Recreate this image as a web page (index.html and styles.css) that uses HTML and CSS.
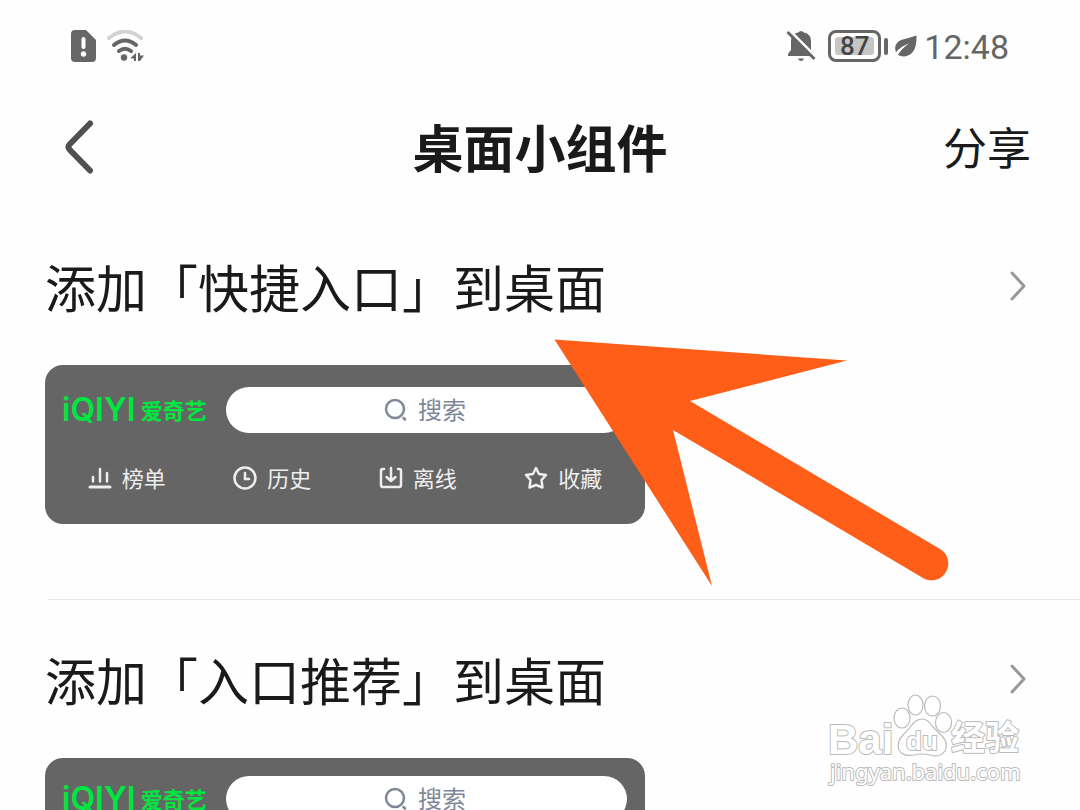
FILE: index.html
```
<!DOCTYPE html>
<html lang="zh-CN">
<head>
    <meta charset="UTF-8">
    <meta name="viewport" content="width=device-width, initial-scale=1.0">
    <title>桌面小组件</title>
    <link rel="stylesheet" href="styles.css">
</head>
<body>
<div class="screen">

    <!-- Status bar -->
    <div class="status-bar">
        <div class="status-group">
            <svg width="26" height="32" viewBox="0 0 26 32">
                <path d="M4 0H15L25 10V28Q25 32 21 32H4Q0 32 0 28V4Q0 0 4 0Z" fill="#666"/>
                <path d="M12.500 9V17" stroke="#fff" stroke-width="4" stroke-linecap="round"/>
                <circle cx="12.500" cy="24" r="2.700" fill="#fff"/>
            </svg>
            <svg width="40" height="32" viewBox="0 0 40 32" fill="none" stroke-width="4" stroke-linecap="round">
                <path d="M3 8Q19 -5 35 8" stroke="#d3d3d3"/>
                <path d="M8 15Q19 6 30 15" stroke="#666"/>
                <path d="M13 21Q19 16.500 25 21" stroke="#666"/>
                <circle cx="18" cy="27.500" r="3.200" fill="#666"/>
                <path d="M25 27.500L30 23V31H28V28.500H25ZM32 23H34V25.500H38L34 31H32Z" fill="#666"/>
            </svg>
        </div>
        <div class="status-group status-right">
            <svg width="32" height="32" viewBox="0 0 32 32">
                <path d="M3 26V24L6 20V11Q6 4 13 2.500Q16 -0.500 19 2.500Q26 4 26 11V20L29 24V26Z" fill="#666"/>
                <path d="M13 28.500H19Q18 31 16 31Q14 31 13 28.500Z" fill="#666"/>
                <path d="M4 0L32 28" stroke="#fff" stroke-width="3"/>
                <path d="M2.500 2L29.500 29" stroke="#666" stroke-width="3"/>
            </svg>
            <div class="battery"><span class="battery-level">87</span></div>
            <svg width="22" height="22" viewBox="0 0 22 22">
                <path d="M21.500 0.500Q22 17 13 20.500Q8 22.500 3 20Q6 14 14 8.500Q5 11.500 1 17.500Q-2 9 6 5Q14 3 21.500 0.500Z" fill="#666"/>
            </svg>
            <span class="clock">12:48</span>
        </div>
    </div>

    <!-- Title bar -->
    <header class="title-bar">
        <button class="back" aria-label="返回">
            <svg width="32" height="56" viewBox="0 0 32 56" fill="none" stroke="#505050" stroke-width="6" stroke-linecap="round" stroke-linejoin="round">
                <path d="M26 4.500L5.500 25.500Q3.500 28 5.500 30.500L26 51.500"/>
            </svg>
        </button>
        <h1>桌面小组件</h1>
        <button class="share">分享</button>
    </header>

    <main>
        <section class="widget">
            <a class="widget-link" href="#">
                <span>添加「快捷入口」到桌面</span>
                <svg width="18" height="32" viewBox="0 0 18 32" fill="none" stroke="#999" stroke-width="3" stroke-linecap="round" stroke-linejoin="round">
                    <path d="M3 3L15 16L3 29"/>
                </svg>
            </a>
            <div class="card">
                <div class="card-top">
                    <div class="logo"><span class="logo-en">iQIYI</span><span class="logo-cn">爱奇艺</span></div>
                    <label class="search">
                        <svg width="24" height="24" viewBox="0 0 24 24" fill="none" stroke="#808798" stroke-width="2.500" stroke-linecap="round">
                            <circle cx="11" cy="11" r="9"/>
                            <path d="M19.500 20L21 21.500"/>
                        </svg>
                        <input type="text" placeholder="搜索" aria-label="搜索">
                    </label>
                </div>
                <nav class="entries">
                    <a href="#">
                        <svg width="24" height="24" viewBox="0 0 24 24" fill="none" stroke="#eee" stroke-width="2.500" stroke-linecap="round">
                            <path d="M5 11V15.500M12 3V15.500M19 7V15.500"/>
                            <path d="M2 21H22" stroke-width="3"/>
                        </svg>
                        <span>榜单</span>
                    </a>
                    <a href="#">
                        <svg width="24" height="24" viewBox="0 0 24 24" fill="none" stroke="#eee" stroke-width="2.500" stroke-linecap="round">
                            <circle cx="12" cy="12" r="10.500"/>
                            <path d="M12 7V13H16"/>
                        </svg>
                        <span>历史</span>
                    </a>
                    <a href="#">
                        <svg width="24" height="24" viewBox="0 0 24 24" fill="none" stroke="#eee" stroke-width="2.500" stroke-linecap="round" stroke-linejoin="round">
                            <path d="M5 3H4Q2 3 2 5V19Q2 21 4 21H20Q22 21 22 19V5Q22 3 20 3H19"/>
                            <path d="M12 2V14M7.500 11L12 15L16.500 11"/>
                        </svg>
                        <span>离线</span>
                    </a>
                    <a href="#">
                        <svg width="24" height="24" viewBox="0 0 24 24" fill="none" stroke="#eee" stroke-width="2.500" stroke-linejoin="round">
                            <path d="M12 2L15 8L22 9L17.500 14L18.500 21.500L12 19L5.500 21.500L6.500 14L2 9L9 8Z"/>
                        </svg>
                        <span>收藏</span>
                    </a>
                </nav>
            </div>
        </section>

        <section class="widget">
            <a class="widget-link" href="#">
                <span>添加「入口推荐」到桌面</span>
                <svg width="18" height="32" viewBox="0 0 18 32" fill="none" stroke="#999" stroke-width="3" stroke-linecap="round" stroke-linejoin="round">
                    <path d="M3 3L15 16L3 29"/>
                </svg>
            </a>
            <div class="card card-tight">
                <div class="card-top">
                    <div class="logo"><span class="logo-en">iQIYI</span><span class="logo-cn">爱奇艺</span></div>
                    <label class="search">
                        <svg width="24" height="24" viewBox="0 0 24 24" fill="none" stroke="#808798" stroke-width="2.500" stroke-linecap="round">
                            <circle cx="11" cy="11" r="9"/>
                            <path d="M19.500 20L21 21.500"/>
                        </svg>
                        <input type="text" placeholder="搜索" aria-label="搜索">
                    </label>
                </div>
            </div>
        </section>
    </main>

    <!-- Pointer arrow drawn over the list -->
    <svg class="arrow" width="396" height="250" viewBox="0 0 396 250">
        <path d="M0.500 0.500L293 21.500L136 62L386 210A16.500 16.500 0 0 1 369 239L119 91L158 247Z" fill="#ff5e18"/>
    </svg>

    <!-- Watermark -->
    <svg class="watermark" width="200" height="100" viewBox="0 0 200 100">
        <g fill="#fff" stroke="#bbb" stroke-width="1.200">
            <text class="mark-bai" x="2" y="62">Bai</text>
            <ellipse cx="76" cy="26" rx="8" ry="10"/>
            <ellipse cx="89.500" cy="13" rx="7.500" ry="10"/>
            <ellipse cx="106.500" cy="14" rx="8" ry="10"/>
            <ellipse cx="117.500" cy="30.500" rx="8" ry="10"/>
            <path d="M96 27Q102 27 107 35Q111 39 116 44Q123 51 119 59Q114 66 104 63Q96 61 88 63Q77 65 73 58Q70 50 77 43Q81 39 85 34Q90 27 96 27Z"/>
            <text class="mark-du" x="80" y="58">du</text>
            <text class="mark-cn" x="125" y="58">经验</text>
            <text class="mark-url" x="4" y="88">jingyan.baidu.com</text>
        </g>
    </svg>
</div>
</body>
</html>
```

FILE: styles.css
```
/* General Styling */
* {
    box-sizing: border-box;
}

body {
    margin: 0;
    background: #fefefe;
    color: #1a1a1a;
    font-family: "Noto Sans CJK SC", sans-serif;
}

a {
    color: inherit;
    text-decoration: none;
}

button {
    padding: 0;
    border: none;
    background: none;
    color: inherit;
    font-family: inherit;
    cursor: pointer;
}

svg {
    display: block;
    flex-shrink: 0;
}

.screen {
    position: relative;
    height: 100vh;
    overflow: hidden;
}

/* Status bar */
.status-bar {
    display: flex;
    justify-content: space-between;
    align-items: center;
    height: 92px;
    padding: 0 71px;
}

.status-group {
    display: flex;
    align-items: center;
    gap: 9px;
}

.status-right {
    gap: 11px;
}

.battery {
    position: relative;
    width: 53px;
    height: 32px;
    margin-right: 3px;
    padding: 4px;
    border: 3px solid #666;
    border-radius: 8px;
}

.battery::after {
    content: "";
    position: absolute;
    top: 5px;
    right: -10px;
    width: 4px;
    height: 17px;
    border-radius: 2px;
    background: #666;
}

.battery-level {
    display: flex;
    align-items: center;
    justify-content: center;
    width: 39px;
    height: 18px;
    border-radius: 3px;
    background: #c6c6c6;
    color: #444;
    font: 500 26px Roboto, sans-serif;
}

.clock {
    margin-left: -4px;
    padding-top: 2px;
    color: #666;
    font: 400 34px Roboto, sans-serif;
}

/* Title bar */
.title-bar {
    display: grid;
    grid-template-columns: 1fr auto 1fr;
    align-items: center;
    height: 115px;
    padding: 0 49px 5px 64px;
}

.title-bar h1,
.share {
    line-height: 60px;
    padding-bottom: 2px;
}

.title-bar h1 {
    margin: 0 0 0 -15px;
    font-size: 51px;
}

.back {
    justify-self: start;
}

.share {
    justify-self: end;
    font-size: 44px;
}

/* Widget sections */
.widget {
    padding: 41px 0 75px 45px;
}

.widget + .widget {
    position: relative;
    padding-top: 42px;
}

.widget + .widget::before {
    content: "";
    position: absolute;
    top: 0;
    left: 48px;
    right: 0;
    height: 1px;
    background: #e8e8e8;
}

.widget-link {
    display: flex;
    justify-content: space-between;
    align-items: center;
    height: 76px;
    padding-right: 53px;
    font-size: 51px;
}

.card {
    width: 600px;
    max-width: 100%;
    height: 159px;
    margin-top: 41px;
    padding-top: 22px;
    border-radius: 18px;
    background: #656565;
}

.card-tight {
    padding-top: 18px;
}

.card-top {
    display: flex;
    align-items: center;
    height: 46px;
    padding: 0 18px 0 17px;
}

.logo {
    display: flex;
    align-items: center;
    gap: 5px;
    width: 164px;
    color: #00e640;
    line-height: 40px;
}

.logo-en {
    font-family: Inter, sans-serif;
    font-size: 32px;
    font-weight: 600;
}

.logo-cn {
    padding-bottom: 3px;
    font-size: 22px;
    font-weight: 700;
}

.search {
    flex: 1;
    display: flex;
    align-items: center;
    justify-content: center;
    gap: 10px;
    height: 46px;
    padding-right: 3px;
    border-radius: 23px;
    background: #fff;
}

.search input {
    width: 48px;
    padding: 0 0 3px;
    border: none;
    outline: none;
    background: none;
    font-family: inherit;
    font-size: 24px;
}

.search input::placeholder {
    color: #808798;
}

.entries {
    display: grid;
    grid-template-columns: repeat(4, 1fr);
    padding: 28px 9px 0;
}

.entries a {
    display: flex;
    align-items: center;
    justify-content: center;
    gap: 10px;
    height: 34px;
    color: #eee;
    font-size: 22px;
    line-height: 30px;
}

.entries span {
    padding-bottom: 3px;
}

/* Overlays */
.arrow {
    position: absolute;
    top: 339px;
    left: 554px;
}

.watermark {
    position: absolute;
    right: 54px;
    bottom: 18px;
}

.watermark text {
    paint-order: stroke;
    stroke-width: 2px;
    stroke-linejoin: round;
}

.mark-bai {
    font: 700 42px "Liberation Sans", sans-serif;
}

.mark-du {
    font: 700 26px "Liberation Sans", sans-serif;
}

.mark-cn {
    font: 700 34px "Noto Sans CJK SC", sans-serif;
}

.mark-url {
    font: 400 22px "Noto Sans", sans-serif;
}
```
